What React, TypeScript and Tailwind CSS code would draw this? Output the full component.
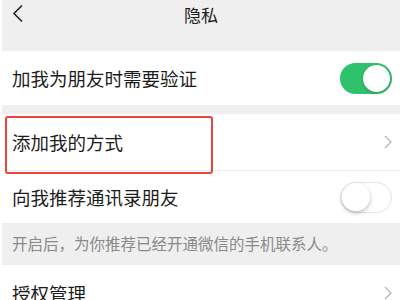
import type { ReactNode } from 'react';

const font = { fontFamily: '"Noto Sans CJK SC", "Noto Sans", sans-serif' };

function Chevron() {
  return (
    <svg width="8" height="14" viewBox="0 0 8 14" className="shrink-0">
      <path d="M1 1l6 6-6 6" fill="none" stroke="#b4b4b4" strokeWidth="1.3" />
    </svg>
  );
}

function Toggle({ on }: { on: boolean }) {
  if (on) {
    return (
      <div className="flex h-[31px] w-[52px] items-center justify-end rounded-full bg-[#2fc26d] px-[2px]">
        <div className="h-[27px] w-[27px] rounded-full bg-white shadow-[0_1px_3px_rgba(0,0,0,0.25)]" />
      </div>
    );
  }
  return (
    <div className="flex h-[31px] w-[52px] items-center justify-start rounded-full border border-[#e3e3e3] bg-white px-[1px]">
      <div className="h-[28px] w-[28px] rounded-full bg-white shadow-[0_2px_4px_rgba(0,0,0,0.25)]" />
    </div>
  );
}

function Row({ label, h, children }: { label: string; h: string; children: ReactNode }) {
  return (
    <div className={`flex shrink-0 items-center justify-between bg-white pl-[10px] pr-[8px] ${h}`}>
      <span className="text-[18.5px] leading-none text-[#1c1c1c]">{label}</span>
      {children}
    </div>
  );
}

export default function App() {
  return (
    <div className="h-[300px] w-[400px] overflow-hidden bg-white pl-[2px]" style={font}>
      <div className="relative flex h-full flex-col bg-[#efefef]">
        <header className="relative flex h-[51px] shrink-0 items-start justify-center pt-[3px]">
          <svg width="12" height="20" viewBox="0 0 12 20" className="absolute left-[10px] top-[4px]">
            <path d="M10 1.5L2 9.5l8 8" fill="none" stroke="#222" strokeWidth="1.6" />
          </svg>
          <span className="text-[17px] leading-[24px] text-[#1c1c1c]">隐私</span>
        </header>

        <Row label="加我为朋友时需要验证" h="h-[54px]">
          <Toggle on />
        </Row>

        <div className="h-[9px] shrink-0" />

        <Row label="添加我的方式" h="h-[56px]">
          <Chevron />
        </Row>
        <div className="h-px shrink-0 bg-[#ececec]" />
        <Row label="向我推荐通讯录朋友" h="h-[52px]">
          <Toggle on={false} />
        </Row>

        <div className="flex h-[42px] shrink-0 items-center pl-[10px]">
          <span className="text-[15.5px] leading-none text-[#8a8a8a]">开启后，为你推荐已经开通微信的手机联系人。</span>
        </div>

        <Row label="授权管理" h="h-[56px]">
          <Chevron />
        </Row>

        <div className="pointer-events-none absolute left-[3px] top-[116px] h-[58px] w-[208px] rounded-[3px] border-2 border-[#e8463b]" />
      </div>
    </div>
  );
}
